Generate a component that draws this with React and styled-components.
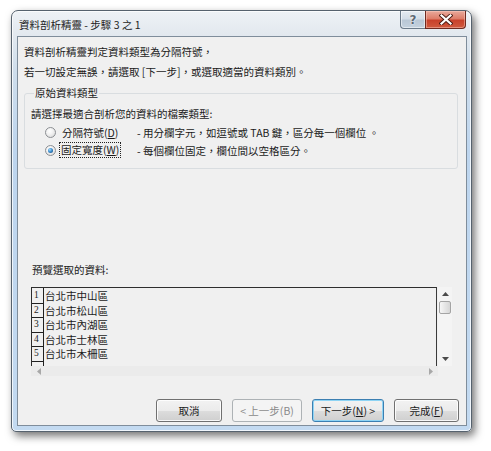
import React from 'react';
import styled, { createGlobalStyle, css } from 'styled-components';

const Global = createGlobalStyle`
  html, body { margin: 0; padding: 0; background: #ffffff; }
  body { font-family: "Noto Sans CJK TC", "Noto Sans", sans-serif; color: #1b1b1b; }
  * { box-sizing: border-box; }
`;

const Stage = styled.div`
  width: 491px;
  height: 451px;
  padding: 10px 0 0 11px;
  font-family: "Noto Sans CJK TC", "Noto Sans", sans-serif;
`;

const Window = styled.div`
  width: 461px;
  height: 422px;
  border: 1px solid #56626e;
  border-radius: 7px 7px 5px 5px;
  background: linear-gradient(to bottom, #eef2f6 0px, #e3e9ef 22px, #cfdeec 60px, #bdd5ee 140px, #c3daf1 100%);
  box-shadow: 3px 4px 9px rgba(0, 0, 0, 0.55), inset 0 0 0 1px rgba(255, 255, 255, 0.75);
  display: flex;
  flex-direction: column;
  padding: 0 4px 5px 5px;
`;

const TitleBar = styled.div`
  height: 25px;
  display: flex;
  align-items: flex-start;
  justify-content: space-between;
  padding-left: 2px;
`;

const Title = styled.div`
  font-size: 10.5px;
  line-height: 14px;
  margin-top: 7px;
  color: #1e1e1e;
`;

const Caption = styled.div`
  display: flex;
  margin-right: 1px;
`;

const CapButton = styled.div`
  height: 18px;
  display: flex;
  align-items: center;
  justify-content: center;
  border: 1px solid #6b7a89;
  border-top: none;
  ${(p) =>
    p.$close
      ? css`
          width: 41px;
          border-color: #6e2a20;
          border-radius: 0 0 4px 0;
          background: linear-gradient(to bottom, #e9a99b 0%, #dd7d69 45%, #c8412b 55%, #d05a3f 100%);
          box-shadow: inset 0 0 0 1px rgba(255, 210, 200, 0.45);
        `
      : css`
          width: 25px;
          border-right: none;
          border-radius: 0 0 0 4px;
          background: linear-gradient(to bottom, #e5ebf1 0%, #d3dde7 45%, #b9c7d5 55%, #c4d1de 100%);
          box-shadow: inset 0 0 0 1px rgba(255, 255, 255, 0.5);
        `}
`;

const HelpGlyph = styled.span`
  font-family: "DejaVu Sans", sans-serif;
  font-size: 12px;
  font-weight: bold;
  line-height: 1;
  color: #5d6974;
  text-shadow: 0 0 1px #fff, 0 0 2px #fff;
`;

const Client = styled.div`
  flex: 1;
  border: 1px solid #7f8d9b;
  background: #f0f0f0;
  display: flex;
  flex-direction: column;
  padding: 5px 7px 0 6px;
`;

const TextLine = styled.div`
  font-size: 10.5px;
  line-height: 20px;
  white-space: nowrap;
`;

const Group = styled.fieldset`
  margin: 4px 1px 0 0;
  border: 1px solid #d9dde0;
  border-radius: 3px;
  padding: 5px 0 9px 6px;
  min-width: 0;
`;

const Legend = styled.legend`
  font-size: 10.5px;
  line-height: 14px;
  padding: 0 1px;
  margin-left: 3px;
`;

const Prompt = styled.div`
  font-size: 10.5px;
  line-height: 18px;
  white-space: nowrap;
`;

const OptionRow = styled.div`
  display: flex;
  align-items: center;
  height: 18px;
  padding-left: 14px;
  font-size: 10.5px;
  white-space: nowrap;
`;

const Radio = styled.span`
  width: 11px;
  height: 11px;
  border-radius: 50%;
  border: 1px solid #8c8f93;
  background: radial-gradient(circle at 40% 35%, #ffffff 0%, #f2f2f2 40%, #d4d4d4 100%);
  display: flex;
  align-items: center;
  justify-content: center;
  flex: none;
  &::after {
    content: '';
    display: ${(p) => (p.$checked ? 'block' : 'none')};
    width: 5px;
    height: 5px;
    border-radius: 50%;
    background: radial-gradient(circle at 38% 35%, #a9dcfa 0%, #3c8fd0 45%, #123c6b 100%);
  }
`;

const OptionLabel = styled.span`
  width: 61px;
  margin-left: 6px;
  display: flex;
  align-items: center;
`;

const Focus = styled.span`
  padding: 0 1px;
  margin-left: -2px;
  line-height: 14px;
  outline: 1px dotted #222;
  outline-offset: 0;
`;

const Desc = styled.span`
  margin-left: 14px;
`;

const PreviewLabel = styled.div`
  font-size: 10.5px;
  line-height: 18px;
  margin-top: 92px;
  padding-left: 8px;
`;

const PreviewArea = styled.div`
  margin-top: 8px;
  margin-left: 7px;
  display: flex;
  flex-direction: column;
  width: 421px;
`;

const PreviewRow = styled.div`
  display: flex;
  height: 79px;
`;

const PreviewBox = styled.div`
  width: 407px;
  border-top: 1px solid #2e2e2e;
  border-left: 1px solid #2e2e2e;
  border-right: 1px solid #3a3a3a;
  display: flex;
  overflow: hidden;
`;

const NumCol = styled.div`
  width: 12px;
  border-right: 1px solid #202020;
  display: flex;
  flex-direction: column;
  padding-top: 1px;
`;

const NumCell = styled.div`
  height: 14.5px;
  border-bottom: 1px solid #202020;
  font-family: "Liberation Serif", serif;
  font-size: 9.5px;
  line-height: 13px;
  padding-left: 2px;
`;

const DataCol = styled.div`
  display: flex;
  flex-direction: column;
  padding-top: 1px;
  padding-left: 1px;
`;

const DataCell = styled.div`
  height: 14.5px;
  font-size: 10.5px;
  line-height: 14px;
  white-space: nowrap;
`;

const VScroll = styled.div`
  width: 14px;
  margin-left: 1px;
  background: #f4f4f4;
  display: flex;
  flex-direction: column;
  align-items: center;
  padding: 5px 0;
`;

const Thumb = styled.div`
  width: 12px;
  height: 13px;
  margin-top: 5px;
  border: 1px solid #a4a4a4;
  border-radius: 2px;
  background: linear-gradient(to right, #f6f6f6, #e4e4e4 55%, #d6d6d6);
`;

const Spacer = styled.div`
  flex: 1;
`;

const HScroll = styled.div`
  width: 407px;
  height: 10px;
  background: #ebebeb;
  display: flex;
  align-items: center;
  justify-content: space-between;
  padding: 0 5px 0 6px;
`;

const Arrow = ({ dir }) => {
  const pts = {
    up: '0,4 3.5,0 7,4',
    down: '0,0 3.5,4 7,0',
    left: '4,0 0,3.5 4,7',
    right: '0,0 4,3.5 0,7',
  }[dir];
  const vertical = dir === 'up' || dir === 'down';
  return (
    <svg width={vertical ? 7 : 4} height={vertical ? 4 : 7} viewBox={vertical ? '0 0 7 4' : '0 0 4 7'}>
      <polygon points={pts} fill={vertical ? '#4a4a4a' : '#a8a8a8'} />
    </svg>
  );
};

const ButtonBar = styled.div`
  display: flex;
  justify-content: flex-end;
  gap: 10px;
  margin-top: 23px;
`;

const Button = styled.div`
  width: ${(p) => p.$w}px;
  height: 23px;
  border-radius: 3px;
  border: 1px solid ${(p) => (p.$disabled ? '#adb2b5' : p.$default ? '#3c7fb1' : '#707070')};
  background: ${(p) =>
    p.$disabled
      ? '#f4f4f4'
      : 'linear-gradient(to bottom, #f2f2f2 0%, #ebebeb 50%, #dddddd 51%, #cfcfcf 100%)'};
  box-shadow: ${(p) =>
    p.$default
      ? 'inset 0 0 0 1px #8ed4f4'
      : p.$disabled
      ? 'none'
      : 'inset 0 0 0 1px rgba(255,255,255,0.85)'};
  display: flex;
  align-items: center;
  justify-content: center;
  font-size: 10.5px;
  color: ${(p) => (p.$disabled ? '#8a8a8a' : '#1b1b1b')};
  white-space: nowrap;
`;

export default function App() {
  return (
    <>
      <Global />
      <Stage lang="zh-Hant-TW">
        <Window>
          <TitleBar>
            <Title>資料剖析精靈 - 步驟 3 之 1</Title>
            <Caption>
              <CapButton>
                <HelpGlyph>?</HelpGlyph>
              </CapButton>
              <CapButton $close>
                <svg width="14" height="11" viewBox="0 0 14 11">
                  <path d="M2.5 1.5 L11.5 9.5 M11.5 1.5 L2.5 9.5" stroke="#4a1a12" strokeWidth="4" strokeLinecap="square" />
                  <path d="M2.5 1.5 L11.5 9.5 M11.5 1.5 L2.5 9.5" stroke="#ffffff" strokeWidth="2.2" strokeLinecap="square" />
                </svg>
              </CapButton>
            </Caption>
          </TitleBar>
          <Client>
            <TextLine>資料剖析精靈判定資料類型為分隔符號，</TextLine>
            <TextLine>若一切設定無誤，請選取 [下一步]，或選取適當的資料類別。</TextLine>
            <Group>
              <Legend>原始資料類型</Legend>
              <Prompt>請選擇最適合剖析您的資料的檔案類型:</Prompt>
              <OptionRow>
                <Radio />
                <OptionLabel>
                  分隔符號(<u>D</u>)
                </OptionLabel>
                <Desc>- 用分欄字元，如逗號或 TAB 鍵，區分每一個欄位 。</Desc>
              </OptionRow>
              <OptionRow>
                <Radio $checked />
                <OptionLabel>
                  <Focus>
                    固定寬度(<u>W</u>)
                  </Focus>
                </OptionLabel>
                <Desc>- 每個欄位固定，欄位間以空格區分。</Desc>
              </OptionRow>
            </Group>
            <PreviewLabel>預覽選取的資料:</PreviewLabel>
            <PreviewArea>
              <PreviewRow>
                <PreviewBox>
                  <NumCol>
                    {[1, 2, 3, 4, 5].map((n) => (
                      <NumCell key={n}>{n}</NumCell>
                    ))}
                  </NumCol>
                  <DataCol>
                    {['台北市中山區', '台北市松山區', '台北市內湖區', '台北市士林區', '台北市木柵區'].map((t) => (
                      <DataCell key={t}>{t}</DataCell>
                    ))}
                  </DataCol>
                </PreviewBox>
                <VScroll>
                  <Arrow dir="up" />
                  <Thumb />
                  <Spacer />
                  <Arrow dir="down" />
                </VScroll>
              </PreviewRow>
              <HScroll>
                <Arrow dir="left" />
                <Arrow dir="right" />
              </HScroll>
            </PreviewArea>
            <ButtonBar>
              <Button $w={66}>取消</Button>
              <Button $w={70} $disabled>
                &lt; 上一步(B)
              </Button>
              <Button $w={72} $default>
                下一步(<u>N</u>) &gt;
              </Button>
              <Button $w={65}>
                完成(<u>F</u>)
              </Button>
            </ButtonBar>
          </Client>
        </Window>
      </Stage>
    </>
  );
}
